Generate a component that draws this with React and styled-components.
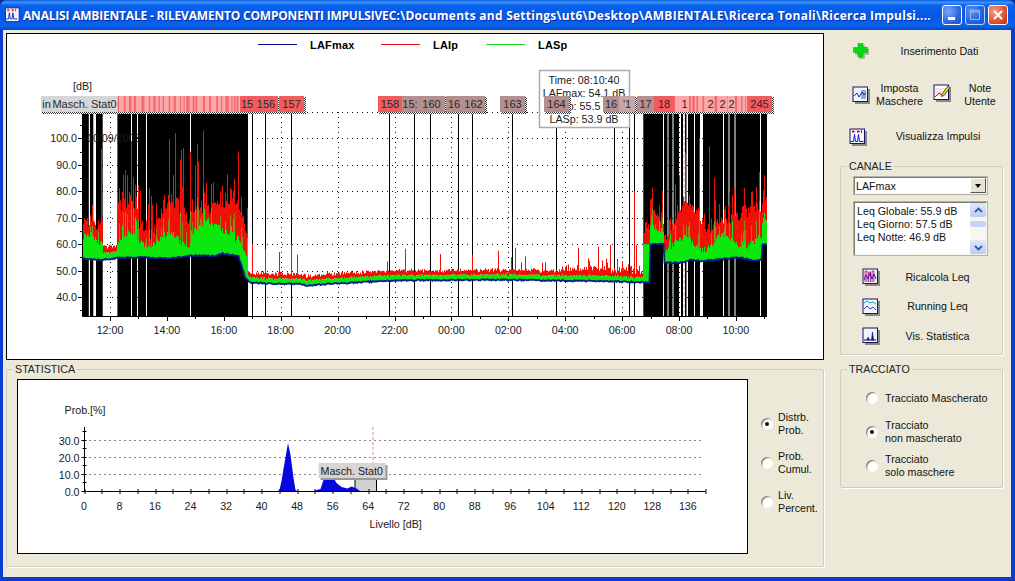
import React from "react";
import styled, { createGlobalStyle } from "styled-components";

const UI_FONT = `"Liberation Sans", Arial, sans-serif`;

const GlobalStyle = createGlobalStyle`
  html, body { margin: 0; padding: 0; background: #0a2a9a; }
  body { font-family: ${UI_FONT}; font-size: 10.7px; color: #111; overflow: hidden; }
`;

/* ---------- chart data ---------- */

function makeRandom(seed) {
  let s = seed;
  return () => {
    s = (s * 16807) % 2147483647;
    return (s - 1) / 2147483646;
  };
}

const dbY = (d) => 297 - (d - 40) * 2.645;

const BASE_POINTS = [
  [82, 54.6], [96, 54], [118, 54.7], [140, 55], [170, 54.6], [190, 55.6], [215, 55.5], [222, 56.5],
  [238, 55.3], [241, 52], [245, 47], [250, 45.5], [270, 45], [298, 45], [307, 44.2], [330, 45],
  [400, 46.3], [500, 46.5], [600, 46], [649, 45.5], [650, 60], [663, 60], [664, 53], [680, 53],
  [690, 54], [700, 53.5], [740, 55], [755, 53.5], [761, 54], [762, 60], [767, 60],
];

const TALL_SPIKES = {
  101: 96, 125: 88, 131: 99, 175: 102, 180: 92, 190: 95, 197: 98, 203: 103, 238: 95,
  699: 100, 709: 97, 252: 60, 265: 58, 279: 57, 291: 60, 297: 56, 634: 80,
};

function baseAt(x) {
  for (let i = 1; i < BASE_POINTS.length; i++) {
    const [x1, y1] = BASE_POINTS[i];
    if (x <= x1) {
      const [x0, y0] = BASE_POINTS[i - 1];
      return y0 + ((y1 - y0) * (x - x0)) / (x1 - x0);
    }
  }
  return 60;
}

function buildMainSeries() {
  const rnd = makeRandom(4711);
  let red = "";
  let olive = "";
  let green = "";
  let blue = "";
  for (let x = 82; x < 767; x++) {
    const b = baseAt(x) + (rnd() - 0.5) * 0.5;
    const px = x + 0.5;
    const loud = x < 103 || (x >= 117 && x < 248) || x >= 650;
    const quietBand = x >= 103 && x < 117;
    let g;
    let r;
    if (quietBand) {
      g = b + 2.5;
      r = g + 1.5 + rnd() * 1.5;
    } else if (loud) {
      const bump = x > 190 && x < 235 ? 4 : 0;
      g = b + 3 + bump + 2.5 * (1 + Math.sin(x / 6.3)) + rnd() * 2.5;
      if (rnd() < 0.12) g += rnd() * 8;
      r = g + 3 + 4 * (1 + Math.sin(x / 9.1 + 1)) + rnd() * 4;
    } else if (x >= 643) {
      g = 60;
      r = 63 + rnd() * 6;
    } else {
      g = b + 1.6 + rnd() * 0.6;
      r = g + 1.2 + rnd() * 1.2 + (x > 560 ? rnd() * 2 : 0);
    }
    let spike = TALL_SPIKES[x] || 0;
    if (!spike && loud && rnd() < 0.28) spike = r + rnd() * 11;
    if (!spike && loud && rnd() < 0.05) spike = r + 12 + rnd() * 12;
    if (!spike && !loud && !quietBand && x > 385 && rnd() < 0.09) spike = r + 2 + rnd() * 7;
    if (x >= 600 && x < 643 && !spike && rnd() < 0.2) spike = r + rnd() * 8;
    if (spike > r) {
      const tip = spike;
      if (loud && rnd() < 0.5) {
        const mid = g + (tip - g) * 0.35;
        olive += `M${px} ${dbY(mid)}V${dbY(g)}`;
        red += `M${px} ${dbY(tip)}V${dbY(mid)}`;
      } else {
        red += `M${px} ${dbY(tip)}V${dbY(r)}`;
      }
    }
    red += `M${px} ${dbY(r)}V${dbY(g)}`;
    green += `M${px} ${dbY(g)}V${dbY(b)}`;
    blue += `${x === 82 ? "M" : "L"}${px} ${dbY(b).toFixed(1)}`;
  }
  return { red, olive, green, blue };
}

const SERIES = buildMainSeries();

const MASKS = [
  [82.3, 88.8], [90, 93.3], [96, 102.7], [117.4, 131], [132, 137], [138, 146], [147, 190], [191, 248],
  [643.3, 663], [664, 667.5], [668.5, 672.5], [673.5, 679], [681, 683], [685, 686.5], [688, 694],
  [695, 700], [703, 723], [724, 728.5], [729.5, 734.5], [735.5, 760], [761, 767],
];

const MARKER_LINES = [252.5, 265.5, 291.5, 389.5, 414.5, 430.5, 458.5, 472.5, 512.5, 556.5, 614.5, 629.5, 634.5];

const HOURS = ["12:00", "14:00", "16:00", "18:00", "20:00", "22:00", "00:00", "02:00", "04:00", "06:00", "08:00", "10:00"];
const hourX = (i) => 110 + i * 56.9;

function buildStripes(from, to, seed) {
  const rnd = makeRandom(seed);
  const out = [];
  let x = from;
  while (x < to) {
    const w = 1 + rnd() * 2.4;
    out.push({ x, w: Math.min(w, to - x) });
    x += w + 1 + rnd() * 5;
  }
  return out;
}

const STRIPES = [...buildStripes(118, 240, 97), ...buildStripes(674, 746, 311)];

const TAGS = [
  { x: 41, w: 11, label: "in", kind: "grey" },
  { x: 52, w: 65, label: "Masch. Stat0", kind: "grey" },
  { x: 240, w: 14, label: "15", kind: "red" },
  { x: 254, w: 24, label: "156", kind: "red" },
  { x: 279, w: 25, label: "157", kind: "red" },
  { x: 378, w: 24, label: "158", kind: "red" },
  { x: 402, w: 16, label: "15:", kind: "rose" },
  { x: 418, w: 27, label: "160", kind: "rose" },
  { x: 446, w: 16, label: "16", kind: "rose" },
  { x: 462, w: 23, label: "162", kind: "rose" },
  { x: 500, w: 25, label: "163", kind: "rose" },
  { x: 544, w: 25, label: "164", kind: "rose" },
  { x: 603, w: 16, label: "16", kind: "rose" },
  { x: 619, w: 16, label: "'1", kind: "pale" },
  { x: 637, w: 17, label: "17", kind: "rose" },
  { x: 654, w: 20, label: "18", kind: "red" },
  { x: 680, w: 9, label: "1", kind: "pink" },
  { x: 707, w: 7, label: "2", kind: "pink" },
  { x: 719, w: 7, label: "2", kind: "pink" },
  { x: 728, w: 7, label: "2", kind: "pink" },
  { x: 747, w: 25, label: "245", kind: "red" },
];

const TAG_COLORS = { grey: "#d6d6d6", red: "#f25c5f", rose: "#b38f90", pale: "#c9a6a6", pink: "#fba6a8" };

const LEQ_LINES = ["Leq Globale: 55.9 dB", "Leq Giorno: 57.5 dB", "Leq Notte: 46.9 dB"];
const STAT_Y = [["30.0", 440.5], ["20.0", 457.5], ["10.0", 474.5], ["0.0", 491.5]];
const statX = (v) => 83.5 + v * 4.44;
const STAT_SHAPE =
  "M276 491.5L279 490L281 481L284 463L287.5 443L290 455L293 478L295 490L298 491.5Z" +
  "M312 491.5L316 490L320 489L323 480L326 476L332 476L336 483L341 487L347 488.5L351 486.5L356 488.5L360 491.5Z";

/* ---------- window frame ---------- */

const Window = styled.div`
  width: 1015px;
  height: 581px;
  display: flex;
  flex-direction: column;
  background: #0a3ccf;
  border-radius: 7px 7px 0 0;
  overflow: hidden;
`;

const TitleBar = styled.header`
  height: 30px;
  flex: none;
  display: flex;
  align-items: center;
  padding: 0 7px 0 4px;
  background: linear-gradient(180deg, #0a5be0 0%, #3b92fb 8%, #0a62ee 18%, #0558e6 55%, #0a62ee 85%, #0347c8 100%);
`;

const TitleText = styled.h1`
  flex: 1;
  margin: 0 0 0 2px;
  color: #fff;
  font: 700 12px "Open Sans", sans-serif;
  letter-spacing: -0.2px;
  white-space: nowrap;
  overflow: hidden;
  text-shadow: 1px 1px 0 #0a2f9a;
`;

const TitlePath = styled.span`
  letter-spacing: 0.25px;
`;

const CaptionButton = styled.div`
  width: 20px;
  height: 20px;
  margin-left: 3px;
  box-sizing: border-box;
  display: flex;
  align-items: center;
  justify-content: center;
  border: 1px solid #fff;
  border-radius: 3px;
  background: ${(p) =>
    p.$close
      ? "radial-gradient(circle at 30% 30%, #f0a088, #e0512f 60%, #b8300f)"
      : "radial-gradient(circle at 30% 30%, #7fa6f6, #2f66e0 60%, #1c4cc8)"};
  opacity: ${(p) => (p.$dim ? 0.72 : 1)};
`;

const Client = styled.main`
  flex: 1;
  margin: 0 4px 4px 3px;
  padding: 3px 8px 0 3px;
  background: #ece9d8;
  display: grid;
  grid-template-columns: 818px 163px;
  column-gap: 16px;
  align-items: start;
`;

const LeftColumn = styled.div`
  display: flex;
  flex-direction: column;
`;

const RightColumn = styled.aside`
  display: flex;
  flex-direction: column;
`;

/* ---------- chart panels ---------- */

const ChartPanel = styled.section`
  box-sizing: border-box;
  width: ${(p) => p.$w}px;
  height: ${(p) => p.$h}px;
  flex: none;
  border: 1px solid #000;
  background: #fff;
`;

const ChartSvg = styled.svg`
  display: block;
  width: 100%;
  height: 100%;
  text {
    font-family: ${UI_FONT};
    font-size: 10.7px;
    fill: #1a1a1a;
  }
  .legend {
    font-weight: 700;
    font-size: 11px;
    letter-spacing: 0.2px;
    fill: #000;
  }
  .tag {
    font-size: 11px;
    fill: #2a2a2a;
  }
`;

const GroupBox = styled.fieldset`
  box-sizing: border-box;
  min-width: 0;
  margin: ${(p) => p.$top || 0}px 0 0;
  padding: 0;
  height: ${(p) => p.$h}px;
  border: 1px solid #cfcdbd;
  border-radius: 2px;
  box-shadow: 1px 1px 0 #fff;
`;

const GroupTitle = styled.legend`
  margin-left: 6px;
  padding: 0 2px;
  font-size: 10.7px;
  line-height: 13px;
  color: #222;
`;

const StatLayout = styled.div`
  display: flex;
  padding: 3px 0 0 10px;
`;

const RadioColumn = styled.div`
  display: flex;
  flex-direction: column;
  padding: ${(p) => p.$pad};
  gap: ${(p) => p.$gap}px;
`;

const RadioOption = styled.label`
  display: flex;
  align-items: center;
  gap: ${(p) => p.$gap || 5}px;
  min-height: 26px;
  line-height: 13px;
`;

const RadioDot = styled.span`
  width: 12px;
  height: 12px;
  flex: none;
  border-radius: 50%;
  background: radial-gradient(circle at 60% 60%, #fff 40%, #e6e3d4 75%);
  box-shadow: inset 1.5px 1.5px 0 -0.4px #8a8a80;
  display: flex;
  align-items: center;
  justify-content: center;
  &::after {
    content: "";
    width: 4px;
    height: 4px;
    border-radius: 50%;
    background: ${(p) => (p.$on ? "#111" : "transparent")};
  }
`;

/* ---------- tool buttons ---------- */

const ToolRow = styled.div`
  display: grid;
  grid-template-columns: ${(p) => p.$cols || "1fr"};
  height: ${(p) => p.$h}px;
  margin-top: ${(p) => p.$top || 0}px;
`;

const ToolButton = styled.div`
  display: flex;
  align-items: center;
  padding-left: ${(p) => p.$inset ?? 12}px;
  svg {
    flex: none;
    transform: translateY(${(p) => p.$lift || 0}px);
  }
`;

const ToolLabel = styled.span`
  flex: 1;
  text-align: center;
  line-height: 13px;
  padding-left: ${(p) => p.$pad ?? 6}px;
`;

/* ---------- channel controls ---------- */

const ChannelBody = styled.div`
  padding: 3px 7px 0 12px;
  display: flex;
  flex-direction: column;
`;

const Sunken = styled.div`
  box-sizing: border-box;
  width: 135px;
  background: #fff;
  border: 2px solid;
  border-color: #7a7a70 #f6f5ee #f6f5ee #7a7a70;
  outline: 1px solid #b5b3a5;
  outline-offset: -1px;
`;

const Select = styled(Sunken)`
  height: 19px;
  display: flex;
  align-items: center;
  justify-content: space-between;
  padding-left: 1px;
`;

const SelectButton = styled.span`
  box-sizing: border-box;
  width: 16px;
  height: 15px;
  background: #e6e3d5;
  border: 1px solid;
  border-color: #fff #555 #555 #fff;
  display: flex;
  align-items: center;
  justify-content: center;
  &::after {
    content: "";
    border: 3.5px solid transparent;
    border-top: 4px solid #000;
    border-bottom: 0;
  }
`;

const ListBox = styled(Sunken)`
  height: 55px;
  margin-top: 6px;
  display: flex;
  justify-content: space-between;
`;

const ListLines = styled.ul`
  list-style: none;
  margin: 0;
  padding: 2px 0 0 2px;
  line-height: 13px;
`;

const ScrollBar = styled.div`
  width: 16px;
  display: flex;
  flex-direction: column;
  background: #f7f6f0;
`;

const ScrollArrow = styled.span`
  flex: none;
  height: 14px;
  background: linear-gradient(180deg, #dfe8fc, #b9cdf7);
  border-radius: 2px;
  display: flex;
  align-items: center;
  justify-content: center;
  color: #3a55a8;
`;

const ScrollThumb = styled.span`
  flex: none;
  height: 6px;
  margin: 4px 0 auto;
  background: #c3d4f8;
  border-radius: 2px;
`;

const ToolStack = styled.div`
  display: flex;
  flex-direction: column;
  margin-top: 6.5px;
`;

/* ---------- icons ---------- */

function PlusIcon() {
  return (
    <svg width="18" height="18" viewBox="0 0 18 18">
      <path d="M6 2h6v4h4v6h-4v4H6v-4H2V6h4z" fill="#b5b3a0" transform="translate(1 1)" />
      <path d="M6 1.5h5v4h4.5v5H11v4.5H6V10.500H1.500v-5H6z" fill="#07d80f" stroke="#05b40b" strokeWidth=".6" />
    </svg>
  );
}

function ChartIcon({ children, bg = "#f2f6ff" }) {
  return (
    <svg width="18" height="18" viewBox="0 0 18 18">
      <rect x="3" y="3" width="15" height="15" fill="#8a8a86" />
      <rect x="1" y="1" width="14.500" height="14.500" fill={bg} stroke="#14146e" />
      {children}
    </svg>
  );
}

const ImpulseLines = () => (
  <>
    <path d="M4 2v3M9 2v3M12.500 2v3M3 3.500h3M8 3.500h3" stroke="#e01010" fill="none" />
    <path d="M1.500 13.500h3l1-7 1 7h2l1-7 1 7h4" stroke="#1020c0" fill="none" />
  </>
);

function TitleIcon() {
  return (
    <svg width="17" height="16" viewBox="0 0 18 18">
      <rect x="1" y="1" width="15.500" height="15.500" fill="#f2f6ff" stroke="#12207e" />
      <ImpulseLines />
    </svg>
  );
}

function NotesIcon() {
  return (
    <ChartIcon bg="#fff">
      <path d="M2 11h12M2 8h12M2 5h12" stroke="#e5a0a0" strokeWidth=".6" />
      <path d="M2 13l4-4 3 2 3-3" stroke="#c01020" fill="none" />
      <path d="M9 10l6-8 2 1.500-6 8-2.500 1z" fill="#e8d020" stroke="#222" strokeWidth=".7" />
    </ChartIcon>
  );
}

const MASK_ICON = (
  <>
    <rect x="9" y="4" width="5" height="9" fill="#9aa8c8" />
    <path d="M2 10l3-3 2 4 3-5 2 3 2-2" stroke="#1030a0" fill="none" />
  </>
);

const RECALC_ICON = (
  <>
    <path d="M3 14V3h2v11M6.500 14V4h2v10M10 14V3h2v11" stroke="#c01070" strokeWidth=".8" fill="#e8c0e0" />
    <path d="M2 12l2-5 2 4 2-6 2 6 2-5 2 5" stroke="#1020c0" fill="none" strokeWidth=".9" />
  </>
);

const RUNNING_ICON = (
  <>
    <path d="M2 5l3-2 3 2 3-1 3 2" stroke="#10a0c0" fill="none" />
    <path d="M2 11l3-3 3 3 3-2 3 3" stroke="#2040c0" fill="none" />
  </>
);

const STAT_ICON = (
  <>
    <path d="M2 13h12" stroke="#111" />
    <path d="M5 13l1.200-3 1 3zM9.500 13l1-8 1 8z" fill="#101080" stroke="#101080" strokeWidth=".6" />
  </>
);

/* ---------- charts ---------- */

function HatchDefs() {
  return (
    <pattern id="hatch" width="2" height="2" patternUnits="userSpaceOnUse">
      <rect width="2" height="2" fill="#fff" />
      <rect width="1" height="1" fill="#333" />
      <rect x="1" y="1" width="1" height="1" fill="#333" />
    </pattern>
  );
}

function MainChart() {
  const dbLevels = [40, 50, 60, 70, 80, 90, 100, 110];
  return (
    <ChartSvg viewBox="7 34 816 325">
      <defs>
        <HatchDefs />
      </defs>

      <path d="M258 44.500h39" stroke="#0a0a90" />
      <text className="legend" x="310" y="48.500">LAFmax</text>
      <path d="M381 44.500h39" stroke="#e01010" />
      <text className="legend" x="433" y="48.500">LAIp</text>
      <path d="M486 44.500h39" stroke="#18d818" />
      <text className="legend" x="538" y="48.500">LASp</text>

      <text x="73" y="90">[dB]</text>

      {dbLevels.map((d) => (
        <path key={d} d={`M82 ${Math.round(dbY(d)) + 0.5}H767`} stroke="#111" strokeDasharray="1 4" />
      ))}
      {HOURS.map((h, i) => (
        <path key={h} d={`M${Math.round(hourX(i)) + 0.5} 112V316`} stroke="#111" strokeDasharray="1 4" />
      ))}

      {MARKER_LINES.map((x) => (
        <path key={x} d={`M${x} 112V316`} stroke="#000" />
      ))}
      {MASKS.map(([a, b]) => (
        <rect key={a} x={a} y="112" width={b - a} height="204.500" fill="#000" />
      ))}
      <path d="M684 112V316" stroke="#f0c8c8" strokeWidth="1.500" strokeDasharray="4 2" />

      <text x="87" y="142" fill="#000">10/09/2003</text>

      <path d={SERIES.red} stroke="#f01008" fill="none" />
      <path d={SERIES.olive} stroke="#8a8a18" fill="none" />
      <path d={SERIES.green} stroke="#0ae80e" fill="none" />
      <path d={SERIES.blue} stroke="#0a1a90" strokeWidth="1.800" fill="none" />

      <path d="M82.500 112V316.500H767" stroke="#000" fill="none" />
      {dbLevels.filter((d) => d < 110).map((d) => (
        <g key={d}>
          <path d={`M78 ${Math.round(dbY(d)) + 0.5}H82`} stroke="#000" />
          <path d={`M80 ${Math.round(dbY(d + 5)) + 0.5}H82`} stroke="#000" />
          <text x="77" y={dbY(d) + 4} textAnchor="end">{d.toFixed(1)}</text>
        </g>
      ))}
      <path d={`M80 ${Math.round(dbY(35)) + 0.5}H82`} stroke="#000" />
      {HOURS.map((h, i) => (
        <g key={h}>
          <path d={`M${Math.round(hourX(i)) + 0.5} 316V321`} stroke="#000" />
          <path d={`M${Math.round(hourX(i) + 28.450) + 0.5} 316V319`} stroke="#000" />
          <text x={hourX(i)} y="334" textAnchor="middle">{h}</text>
        </g>
      ))}

      <rect x="539.500" y="70.500" width="90" height="57" fill="#fff" stroke="#aaa" strokeWidth="1.500" />
      <text x="584" y="84" textAnchor="middle">Time: 08:10:40</text>
      <text x="584" y="97" textAnchor="middle">LAFmax: 54.1 dB</text>
      <text x="584" y="110" textAnchor="middle">LAIp: 55.5 dB</text>
      <text x="584" y="123" textAnchor="middle">LASp: 53.9 dB</text>

      <rect x="42" y="97" width="76" height="17" fill="url(#hatch)" />
      <rect x="118" y="97" width="188" height="17" fill="url(#hatch)" />
      <rect x="379" y="97" width="108" height="17" fill="url(#hatch)" />
      <rect x="501" y="97" width="26" height="17" fill="url(#hatch)" />
      <rect x="545" y="97" width="26" height="17" fill="url(#hatch)" />
      <rect x="604" y="97" width="170" height="17" fill="url(#hatch)" />

      <rect x="117" y="96" width="125" height="16" fill="#fba8aa" />
      <rect x="674" y="96" width="75" height="16" fill="#fba8aa" />
      {STRIPES.map((s) => (
        <rect key={s.x} x={s.x} y="96" width={s.w} height="16" fill="#f4696c" />
      ))}
      {TAGS.map((t) => (
        <g key={t.x}>
          <rect x={t.x} y="96" width={t.w} height="16" fill={TAG_COLORS[t.kind]} />
          <text className="tag" x={t.x + t.w / 2} y="108" textAnchor="middle">{t.label}</text>
        </g>
      ))}
    </ChartSvg>
  );
}

function StatChart() {
  const ticks = [];
  for (let v = 0; v <= 140; v += 4) ticks.push(v);
  return (
    <ChartSvg viewBox="18 380 728 173">
      <defs>
        <HatchDefs />
      </defs>
      <text x="64" y="414">Prob.[%]</text>

      {STAT_Y.slice(0, 3).map(([, y]) => (
        <path key={y} d={`M84 ${y}H703`} stroke="#111" strokeDasharray="1 4" />
      ))}

      <rect x="354.500" y="478" width="21.500" height="13.500" fill="url(#hatch)" opacity=".45" />
      <path d="M354.500 478V491.500M376 478V491.500" stroke="#000" />
      <path d="M372.500 427V478" stroke="#d88a9a" strokeDasharray="3 2" />

      <path d={STAT_SHAPE} fill="#0606e0" />

      <path d="M84 427V491.500H705" stroke="#000" fill="none" />
      {STAT_Y.map(([label, y]) => (
        <g key={label}>
          <path d={`M81 ${y}H86`} stroke="#000" />
          <text x="79" y={y + 4} textAnchor="end">{label}</text>
        </g>
      ))}
      {[432, 449, 466, 483].map((y) => (
        <path key={y} d={`M82 ${y - 0.5}H86`} stroke="#000" />
      ))}
      {ticks.map((v) => (
        <path key={v} d={`M${Math.round(statX(v)) + 0.5} 489V494`} stroke="#000" />
      ))}
      {ticks.filter((v) => v % 8 === 0 && v <= 136).map((v) => (
        <text key={v} x={statX(v)} y="509.500" textAnchor="middle">{v}</text>
      ))}
      <text x="369" y="528">Livello [dB]</text>

      <rect x="320" y="465" width="67" height="15" fill="url(#hatch)" />
      <rect x="318" y="463" width="67" height="15" fill="#d6d6d6" />
      <text x="320" y="474.500">Masch. Stat0</text>
    </ChartSvg>
  );
}

/* ---------- page ---------- */

export default function App() {
  return (
    <>
      <GlobalStyle />
      <Window>
        <TitleBar>
          <TitleIcon />
          <TitleText>
            ANALISI AMBIENTALE - RILEVAMENTO COMPONENTI IMPULSIVE
            <TitlePath>C:\Documents and Settings\ut6\Desktop\AMBIENTALE\Ricerca Tonali\Ricerca Impulsi....</TitlePath>
          </TitleText>
          <CaptionButton>
            <svg width="12" height="12" viewBox="0 0 12 12"><rect x="2" y="8" width="7" height="3" fill="#fff" /></svg>
          </CaptionButton>
          <CaptionButton $dim>
            <svg width="12" height="12" viewBox="0 0 12 12"><path d="M1.500 1.500h9v9h-9zM1.500 3h9" stroke="#cfdcf8" fill="none" /></svg>
          </CaptionButton>
          <CaptionButton $close>
            <svg width="12" height="12" viewBox="0 0 12 12"><path d="M2 2l8 8M10 2l-8 8" stroke="#fff" strokeWidth="2" /></svg>
          </CaptionButton>
        </TitleBar>

        <Client>
          <LeftColumn>
            <ChartPanel $w={818} $h={327}>
              <MainChart />
            </ChartPanel>
            <GroupBox $top={3} $h={204}>
              <GroupTitle>STATISTICA</GroupTitle>
              <StatLayout>
                <ChartPanel $w={731} $h={175}>
                  <StatChart />
                </ChartPanel>
                <RadioColumn $pad="31.5px 0 0 13px" $gap={13}>
                  <RadioOption><RadioDot $on /><span>Distrb.<br />Prob.</span></RadioOption>
                  <RadioOption><RadioDot /><span>Prob.<br />Cumul.</span></RadioOption>
                  <RadioOption><RadioDot /><span>Liv.<br />Percent.</span></RadioOption>
                </RadioColumn>
              </StatLayout>
            </GroupBox>
          </LeftColumn>

          <RightColumn>
            <ToolRow $h={36}>
              <ToolButton><PlusIcon /><ToolLabel>Inserimento Dati</ToolLabel></ToolButton>
            </ToolRow>
            <ToolRow $h={44} $top={3.5} $cols="80px 83px">
              <ToolButton>
                <ChartIcon>{MASK_ICON}</ChartIcon>
                <ToolLabel>Imposta<br />Maschere</ToolLabel>
              </ToolButton>
              <ToolButton $inset={13} $lift={-2}>
                <NotesIcon />
                <ToolLabel>Note<br />Utente</ToolLabel>
              </ToolButton>
            </ToolRow>
            <ToolRow $h={36} $top={2}>
              <ToolButton $inset={9}>
                <ChartIcon><ImpulseLines /></ChartIcon>
                <ToolLabel>Visualizza Impulsi</ToolLabel>
              </ToolButton>
            </ToolRow>

            <GroupBox $top={5.5} $h={195}>
              <GroupTitle>CANALE</GroupTitle>
              <ChannelBody>
                <Select>
                  <span>LAFmax</span>
                  <SelectButton />
                </Select>
                <ListBox>
                  <ListLines>
                    {LEQ_LINES.map((line) => <li key={line}>{line}</li>)}
                  </ListLines>
                  <ScrollBar>
                    <ScrollArrow>
                      <svg width="9" height="7" viewBox="0 0 9 7"><path d="M1 5l3.500-3.500L8 5" stroke="currentColor" strokeWidth="1.800" fill="none" /></svg>
                    </ScrollArrow>
                    <ScrollThumb />
                    <ScrollArrow>
                      <svg width="9" height="7" viewBox="0 0 9 7"><path d="M1 2l3.500 3.500L8 2" stroke="currentColor" strokeWidth="1.800" fill="none" /></svg>
                    </ScrollArrow>
                  </ScrollBar>
                </ListBox>
                <ToolStack>
                  <ToolRow $h={29.5}>
                    <ToolButton $inset={9}><ChartIcon>{RECALC_ICON}</ChartIcon><ToolLabel $pad={0}>Ricalcola Leq</ToolLabel></ToolButton>
                  </ToolRow>
                  <ToolRow $h={29.5}>
                    <ToolButton $inset={9}><ChartIcon>{RUNNING_ICON}</ChartIcon><ToolLabel $pad={0}>Running Leq</ToolLabel></ToolButton>
                  </ToolRow>
                  <ToolRow $h={29.5}>
                    <ToolButton $inset={9}><ChartIcon bg="#eef2fa">{STAT_ICON}</ChartIcon><ToolLabel $pad={0}>Vis. Statistica</ToolLabel></ToolButton>
                  </ToolRow>
                </ToolStack>
              </ChannelBody>
            </GroupBox>

            <GroupBox $top={8} $h={125}>
              <GroupTitle>TRACCIATO</GroupTitle>
              <RadioColumn $pad="9px 0 0 25px" $gap={8}>
                <RadioOption $gap={7}><RadioDot /><span>Tracciato Mascherato</span></RadioOption>
                <RadioOption $gap={7}><RadioDot $on /><span>Tracciato<br />non mascherato</span></RadioOption>
                <RadioOption $gap={7}><RadioDot /><span>Tracciato<br />solo maschere</span></RadioOption>
              </RadioColumn>
            </GroupBox>
          </RightColumn>
        </Client>
      </Window>
    </>
  );
}
